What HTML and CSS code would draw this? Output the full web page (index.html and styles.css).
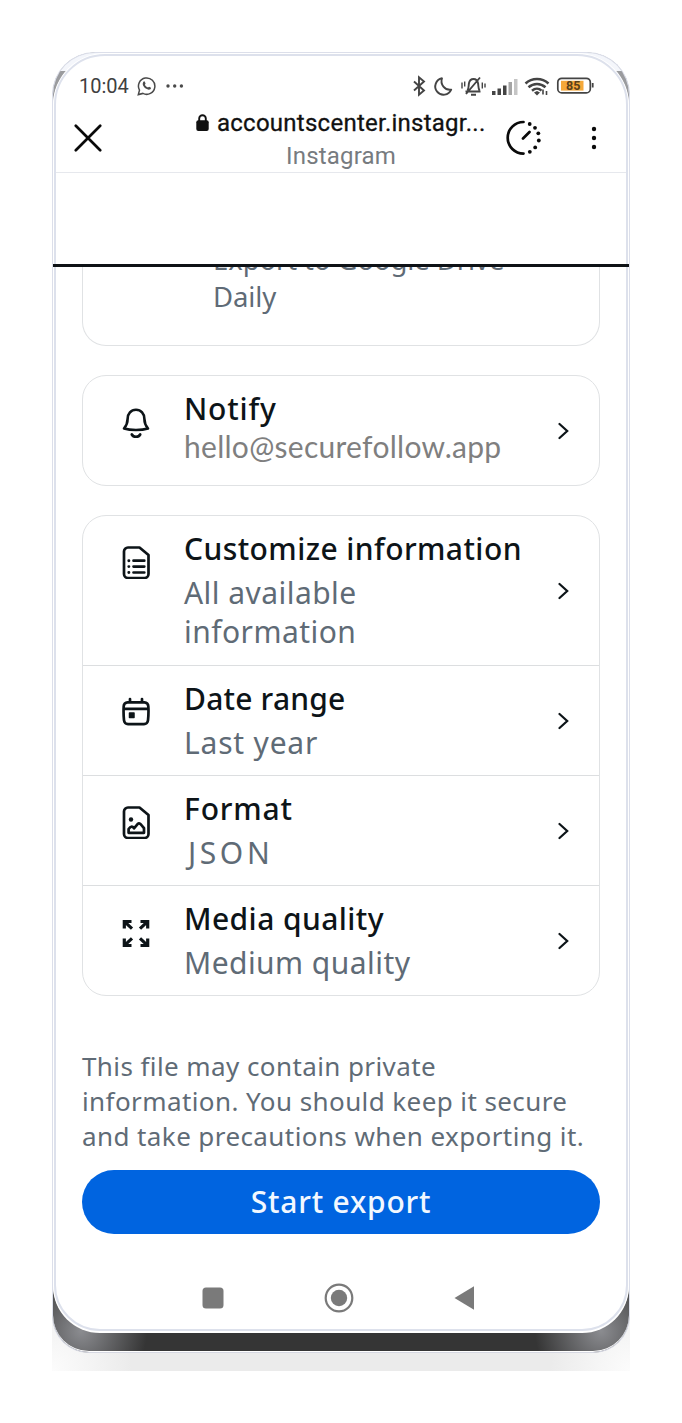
FILE: index.html
```html
<!DOCTYPE html>
<html lang="en">
<head>
    <title>Export your information</title>
    <meta charset="utf-8">
    <meta name="viewport" content="width=device-width, initial-scale=1">
    <link rel="stylesheet" href="styles.css">
</head>
<body>
    <div class="stage">
        <div class="phone">
            <div class="screen">
                <div class="status-bar">
                    <span class="clock">10:04</span>
                    <svg class="whatsapp" width="20" height="20" viewBox="0 0 20 20" fill="none" stroke="#4a4a4a" stroke-width="1.5">
                        <path d="M1.3 18.6l1.2-4.5A8.2 8.2 0 1 1 5.9 17.4z"/>
                        <path d="M6.2 6.1c.7-1 1.4-.9 1.7-.2l.7 1.6-.7 1.2c.7 1.4 1.7 2.2 3.1 2.900l1.100-.9 1.900 1c.3 1.300-1.200 2.100-2.300 2-3.400-.7-5.900-3.400-6-5.900z" fill="#4a4a4a" stroke="none"/>
                    </svg>
                    <svg class="dots" width="18" height="4" viewBox="0 0 18 4" fill="#4a4a4a">
                        <circle cx="2" cy="2" r="1.700"/><circle cx="8.700" cy="2" r="1.700"/><circle cx="15.400" cy="2" r="1.700"/>
                    </svg>
                    <svg class="status-icons" width="184" height="24" viewBox="0 0 184 24" fill="none" stroke="#444" stroke-width="1.900">
                        <!-- bluetooth -->
                        <path d="M2 7.500l10 9-5 4.300V3.200l5 4.300-10 9"/>
                        <!-- moon -->
                        <path d="M30 4.300a8.300 8.300 0 1 0 9.200 11.400A8.600 8.600 0 0 1 30 4.300z" stroke-linejoin="round"/>
                        <!-- muted bell -->
                        <path d="M53.500 17.500h15M55.500 16.500c1.300-2 1-4.500 1.400-7 .6-3.200 2.600-4.500 4.600-4.500s4 1.300 4.600 4.500c.4 2.500.1 5 1.400 7M59 20.800h5M54 20L68 3.500"/>
                        <path d="M50 8.500v6M52.700 7.500v5M70.300 8.500v6M73 9.500v4" stroke-width="1.400"/>
                        <!-- signal -->
                        <g stroke="none" fill="#444">
                            <rect x="80" y="17" width="3.500" height="4"/>
                            <rect x="85.500" y="14.500" width="3.500" height="6.500"/>
                            <rect x="91" y="11.500" width="3.500" height="9.500"/>
                            <rect x="96.500" y="8" width="3.500" height="13" fill="#a5a5a5"/>
                            <rect x="102" y="5" width="3.500" height="16" fill="#c5c5c5"/>
                        </g>
                        <!-- wifi -->
                        <path d="M113.500 9.500c6.500-6 16.500-6 23 0M116.500 13.300c5-4.500 12-4.500 17 0M120 16.700c3-2.600 7-2.600 9.500 0" stroke-width="2.500"/>
                        <path d="M122 18.500l3-1.500 3 1.500-3 3z" fill="#444" stroke="none"/>
                        <path d="M131 15.500v5M134.500 17v4" stroke-width="1.600"/>
                        <!-- battery -->
                        <rect x="145.800" y="4.300" width="32.500" height="14.600" rx="4" stroke-width="1.700"/>
                        <rect x="149" y="6.800" width="22.500" height="9.800" fill="#f5a83a" stroke="none"/>
                        <path d="M180.700 9v4.500" stroke-width="1.800"/>
                        <text x="154" y="16.300" class="battery-text">85</text>
                    </svg>
                </div>

                <div class="browser-bar">
                    <svg class="close" width="28" height="28" viewBox="0 0 28 28" stroke="#0a0a0a" stroke-width="2.700" stroke-linecap="round">
                        <path d="M1.800 1.800l24.400 24.400M26.200 1.800L1.800 26.200"/>
                    </svg>
                    <div class="address">
                        <div class="url">
                            <svg width="13" height="18" viewBox="0 0 13 18">
                                <rect x="0.300" y="6.300" width="12.400" height="10.700" rx="2" fill="#111"/>
                                <path d="M3.200 7V4.600a3.300 3.300 0 0 1 6.600 0V7" fill="none" stroke="#111" stroke-width="1.900"/>
                            </svg>
                            <span>accountscenter.instagr...</span>
                        </div>
                        <div class="site">Instagram</div>
                    </div>
                    <svg class="timer" width="36" height="36" viewBox="0 0 36 36" fill="none" stroke="#0a0a0a" stroke-width="2.700" stroke-linecap="round">
                        <path d="M17.500 2a15.800 15.800 0 0 0 0 31.600M17 18.500l6.500-6.500"/>
                        <g fill="#0a0a0a" stroke="none">
                            <circle cx="23.700" cy="4" r="1.900"/><circle cx="29" cy="7.800" r="1.900"/><circle cx="32.300" cy="13.300" r="1.900"/>
                            <circle cx="32.800" cy="20.500" r="1.900"/><circle cx="29.200" cy="27.400" r="1.900"/><circle cx="23.800" cy="31.800" r="1.900"/>
                        </g>
                    </svg>
                    <svg class="menu" width="6" height="24" viewBox="0 0 6 24" fill="#0a0a0a">
                        <circle cx="3" cy="3" r="2.200"/><circle cx="3" cy="12" r="2.200"/><circle cx="3" cy="21" r="2.200"/>
                    </svg>
                </div>

                <div class="sheet-top"></div>

                <main class="content">
                    <div class="card card-cut">
                        <p>Export to Google Drive</p>
                        <p>Daily</p>
                    </div>

                    <div class="card">
                        <div class="row notify">
                            <svg class="icon" width="28" height="34" viewBox="0 0 28 34" fill="none" stroke="#0d1418" stroke-width="2.600" stroke-linejoin="round" stroke-linecap="round">
                                <path d="M2 23.500c2.500-3 3.600-5 3.600-9.500C5.600 8.500 9 4.800 14 4.800s8.400 3.700 8.400 9.200c0 4.500 1.100 6.500 3.600 9.500-6.500 2-17.500 2-24 0z"/>
                                <path d="M9.800 29.500c1.600 3 6.800 3 8.400 0" stroke-width="2.700"/>
                            </svg>
                            <div class="label">
                                <h2 class="wide">Notify</h2>
                                <p class="email">hello@securefollow.app</p>
                            </div>
                            <svg class="chevron" width="11" height="18" viewBox="0 0 11 18"><path d="M1.500 2l7.700 7-7.700 7"/></svg>
                        </div>
                    </div>

                    <div class="card">
                        <div class="row tall">
                            <svg class="icon" width="28" height="34" viewBox="0 0 28 34" fill="none" stroke="#0d1418" stroke-width="2.700" stroke-linejoin="round" stroke-linecap="round">
                                <path d="M6 2.500h11.500L26.500 10V29a4 4 0 0 1-4 4H6a4 4 0 0 1-4-4V6.500a4 4 0 0 1 4-4z"/>
                                <path d="M11.500 15.700h10.800M11.500 21.600h10.800M11.500 27.500h10.800"/>
                                <path d="M6.800 15.700h.1M6.800 21.600h.1M6.800 27.500h.1" stroke-width="2.900"/>
                            </svg>
                            <div class="label">
                                <h2>Customize information</h2>
                                <p>All available<br>information</p>
                            </div>
                            <svg class="chevron" width="11" height="18" viewBox="0 0 11 18"><path d="M1.500 2l7.700 7-7.700 7"/></svg>
                        </div>
                        <div class="row">
                            <svg class="icon" width="28" height="34" viewBox="0 0 28 34" fill="none" stroke="#0d1418" stroke-width="2.700" stroke-linejoin="round" stroke-linecap="round">
                                <path d="M5.500 7.300h17a4 4 0 0 1 3.800 4c.4 5 .2 9-.3 14a4 4 0 0 1-4 3.800H6a4 4 0 0 1-4-3.800c-.5-5-.6-9-.3-14a4 4 0 0 1 3.800-4zM2 13.800h24M8 4v3M20 4v3"/>
                                <rect x="7.500" y="18" width="4.500" height="4.500" fill="#0d1418" stroke-width="1.500"/>
                            </svg>
                            <div class="label">
                                <h2 class="snug">Date range</h2>
                                <p class="wide">Last year</p>
                            </div>
                            <svg class="chevron" width="11" height="18" viewBox="0 0 11 18"><path d="M1.500 2l7.700 7-7.700 7"/></svg>
                        </div>
                        <div class="row">
                            <svg class="icon" width="28" height="34" viewBox="0 0 28 34" fill="none" stroke="#0d1418" stroke-width="2.700" stroke-linejoin="round" stroke-linecap="round">
                                <path d="M6 2.500h11.500L26.500 10V29a4 4 0 0 1-4 4H6a4 4 0 0 1-4-4V6.500a4 4 0 0 1 4-4z"/>
                                <circle cx="9" cy="14.500" r="2.200" fill="#0d1418" stroke="none"/>
                                <path d="M6.600 27.800V24c2-2.500 3.500-3.300 5.400-.7l4-4.600c1.500-1.500 3.500 1.300 6 4.500v4.600z"/>
                            </svg>
                            <div class="label">
                                <h2 class="wide">Format</h2>
                                <p class="json">JSON</p>
                            </div>
                            <svg class="chevron" width="11" height="18" viewBox="0 0 11 18"><path d="M1.500 2l7.700 7-7.700 7"/></svg>
                        </div>
                        <div class="row">
                            <svg class="icon" width="28" height="34" viewBox="0 0 28 34" fill="none" stroke="#0d1418" stroke-width="3.200">
                                <path d="M9.500 6.500H2.300v7M2.500 6.700l7.500 7M18.500 6.500h7.200v7M25.500 6.700l-7.500 7M9.500 30.500H2.300v-7M2.500 30.300l7.500-7M18.500 30.500h7.200v-7M25.500 30.300l-7.500-7"/>
                            </svg>
                            <div class="label">
                                <h2>Media quality</h2>
                                <p>Medium quality</p>
                            </div>
                            <svg class="chevron" width="11" height="18" viewBox="0 0 11 18"><path d="M1.500 2l7.700 7-7.700 7"/></svg>
                        </div>
                    </div>

                    <p class="note">This file may contain private<br>information. You should keep it secure<br>and take precautions when exporting it.</p>
                    <button type="button" class="export-btn">Start export</button>
                </main>

                <nav class="nav-bar">
                    <svg width="272" height="30" viewBox="0 0 272 30" fill="#7a7a7a">
                        <rect x="0.500" y="4.500" width="21" height="21" rx="3.500"/>
                        <circle cx="137" cy="15" r="13.300" fill="none" stroke="#7a7a7a" stroke-width="2.200"/>
                        <circle cx="137" cy="15" r="8.200"/>
                        <path d="M252.500 15L272 3.200v23.600z"/>
                    </svg>
                </nav>
            </div>
        </div>
    </div>
</body>
</html>
```

FILE: styles.css
```css
* {
    box-sizing: border-box;
}

body {
    margin: 0;
    padding: 52px 0 0 52px;
    background: #fff;
    font-family: "Noto Sans", sans-serif;
}

h2, p {
    margin: 0;
}

svg {
    display: block;
    flex: none;
}

.stage {
    width: 578px;
    height: 1319px;
    background:
        radial-gradient(circle at 0 100%, #fcfcfc 0, #f6f6f6 30px, rgba(235,235,235,0) 80px),
        radial-gradient(circle at 100% 100%, #fcfcfc 0, #f6f6f6 30px, rgba(235,235,235,0) 80px),
        linear-gradient(#fff 1250px, #ebebeb 1290px);
}

/* dark body that shows behind the screen corners and along the bottom */
.phone {
    width: 578px;
    height: 1301px;
    border: 1px solid #dcdfea;
    border-bottom-color: #d6d8e2;
    border-radius: 43px 43px 37px 37px;
    background:
        linear-gradient(#f4f6fb 18px, transparent 18px),
        linear-gradient(#9a9b9e 60px, transparent 60px),
        radial-gradient(circle at 28px 1278px, #8b8c90 0, rgba(53,53,53,0) 66px),
        radial-gradient(circle at 548px 1278px, #8b8c90 0, rgba(53,53,53,0) 66px),
        #353535;
    padding: 1px 1px 0;
    box-shadow: inset 0 -1px 0 #fff;
}

.screen {
    height: 1277px;
    border: 2px solid #dde1ec;
    border-radius: 51px 51px 46px 46px;
    background: #fff;
    box-shadow: 0 0 0 1px #fff, 0 1px 0 1px #fff;
}

.status-bar {
    display: flex;
    align-items: center;
    height: 58px;
    padding: 1px 30px 0 23px;
}

.clock {
    width: 50px;
    font: 20px/24px Roboto, sans-serif;
    color: #404040;
}

.whatsapp {
    margin-left: 8px;
}

.dots {
    margin-left: 9px;
}

.status-icons {
    margin-left: auto;
}

.battery-text {
    font: bold 12.5px Roboto, sans-serif;
    fill: #59401c;
    stroke: none;
}

.browser-bar {
    display: flex;
    height: 59px;
    padding-left: 18px;
    border-bottom: 1px solid #e6e8ed;
}

.close {
    margin-top: 10px;
}

.address {
    width: 310px;
    margin-left: 84px;
    padding-left: 10px;
}

.url {
    display: flex;
    align-items: center;
    height: 22px;
    margin-top: -2px;
    font: 24px/22px Roboto, sans-serif;
    letter-spacing: 0.25px;
    color: #111;
    white-space: nowrap;
    -webkit-text-stroke: 0.3px #111;
}

.url span {
    margin-left: 8px;
}

.site {
    margin: 6px 0 0 90px;
    font: 24px/32px Roboto, sans-serif;
    letter-spacing: 0.2px;
    color: #777b7f;
}

.timer {
    margin: 6px 0 0 10px;
}

.menu {
    margin: 12px 0 0 49px;
}

.sheet-top {
    height: 94px;
    margin: 0 -3px;
    border-bottom: 3px solid #0e1216;
}

.content {
    padding: 0 26px;
}

.card {
    border: 1px solid #e0e2e4;
    border-radius: 24px;
    margin-bottom: 29px;
    font-size: 30px;
    line-height: 39px;
    color: #5f6b76;
}

/* scrolled half way under the sheet header */
.card-cut {
    height: 79px;
    padding-left: 130px;
    border-top: 0;
    border-radius: 0 0 24px 24px;
    overflow: hidden;
    font-size: 27.5px;
    line-height: 37px;
    letter-spacing: -0.1px;
    white-space: nowrap;
}

.card-cut p:first-child {
    margin-top: -26px;
}

.row {
    display: flex;
    align-items: center;
    height: 110px;
    padding: 0 30px 0 39px;
}

.row + .row {
    border-top: 1px solid #dcdee0;
}

.row.notify {
    height: 109px;
}

.row.tall {
    height: 149px;
}

.icon {
    align-self: flex-start;
    margin-top: 29px;
}

.label {
    flex: 1;
    align-self: flex-start;
    margin-left: 34px;
    padding-top: 11px;
    white-space: nowrap;
}

.label h2 {
    font-size: 30px;
    font-weight: 500;
    line-height: 44px;
    letter-spacing: 0.42px;
    color: #0d1418;
}

.label p {
    margin-top: 2px;
    letter-spacing: 0.45px;
}

.label .wide {
    letter-spacing: 0.8px;
}

.label .snug {
    letter-spacing: 0.2px;
}

.label .json {
    padding-left: 4px;
    letter-spacing: 3.6px;
}

.label .email {
    margin-top: -4px;
    font-family: Lato, sans-serif;
    font-size: 30px;
    letter-spacing: 0.28px;
    color: #7f7f7f;
}

.chevron {
    fill: none;
    stroke: #0d1418;
    stroke-width: 2.2;
    stroke-linecap: round;
}

.note {
    margin-top: 53px;
    font-size: 26px;
    line-height: 35px;
    letter-spacing: 0.41px;
    color: #5f6b76;
    white-space: nowrap;
}

.export-btn {
    display: block;
    width: 100%;
    height: 64px;
    margin-top: 16px;
    padding: 0 0 2px;
    border: 0;
    border-radius: 32px;
    background: #0064e0;
    color: #f2f8ff;
    font: 500 30px "Noto Sans", sans-serif;
    letter-spacing: 0.8px;
}

.nav-bar {
    padding: 49px 0 0 146px;
}
```
